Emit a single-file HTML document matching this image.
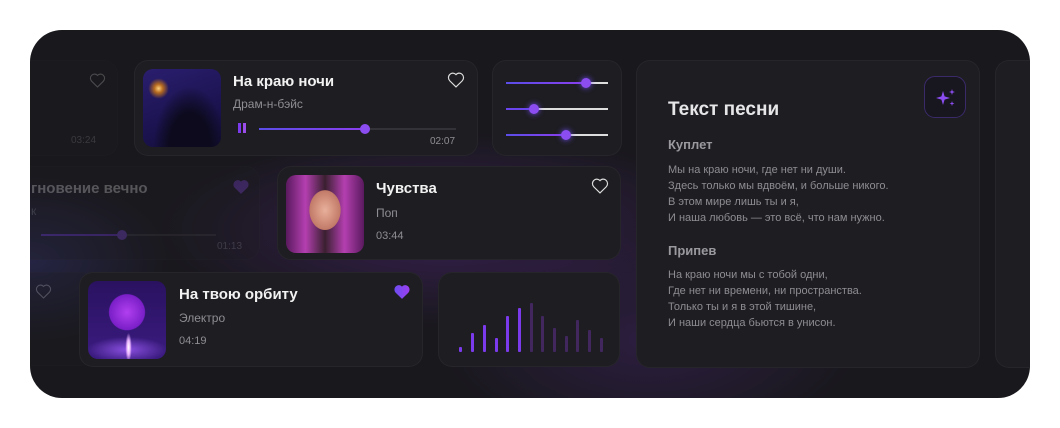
<!DOCTYPE html>
<html><head><meta charset="utf-8"><style>
*{margin:0;padding:0;box-sizing:border-box}
body{width:1060px;height:428px;background:#fff;position:relative;overflow:hidden;font-family:"Liberation Sans",sans-serif}
.wrap{position:absolute;left:30px;top:30px;width:1000px;height:368px;border-radius:32px;overflow:hidden;
background:radial-gradient(ellipse 420px 140px at 420px 200px,rgba(90,40,140,.45),transparent 70%),
radial-gradient(ellipse 300px 150px at 620px 310px,rgba(80,40,130,.35),transparent 70%),
radial-gradient(ellipse 200px 120px at 0px 230px,rgba(60,60,140,.35),transparent 70%),#19181d}
.c{position:absolute;background:#1e1d22;border-radius:14px;border:1px solid rgba(255,255,255,.04)}
.abs{position:absolute}
.t{color:#f2f2f2;font-size:15px;font-weight:bold;white-space:nowrap}
.g{color:#8e8e93;font-size:12px;white-space:nowrap}
.tm{color:#8e8e93;font-size:10px}
.art{position:absolute;border-radius:10px;overflow:hidden}
.fade{opacity:.28}
.bar{position:absolute;width:3px;bottom:14px;border-radius:1px}
.lyr{color:#8d8d92;font-size:11px;line-height:16px}
</style></head><body>
<div class="wrap">
 <div class="c fade" style="left:-40px;top:30px;width:128px;height:96px">
  <svg class="abs" style="left:98px;top:12px" width="17" height="15" viewBox="0 0 24 22"><path d="M12 20.5 3.5 12.2C1 9.7 1 5.7 3.5 3.3s6.3-2.3 8.5.3c2.2-2.6 6-2.8 8.5-.3s2.5 6.4 0 8.9z" fill="none" stroke="#ccc" stroke-width="1.6"/></svg>
  <div class="abs tm" style="left:80px;top:74px">03:24</div>
 </div>
 <div class="c" style="left:104px;top:30px;width:344px;height:96px">
  <div class="art" style="left:8px;top:8px;width:78px;height:78px;background:radial-gradient(circle at 20% 25%,#ffcf7a 0,#b56a20 5%,transparent 12%),radial-gradient(ellipse at 60% 100%,#0c0a1c 0,#0c0a1c 30%,transparent 55%),linear-gradient(160deg,#2a1e6e,#1b1350 60%,#120e36)"></div>
  <div class="abs t" style="left:98px;top:12px">На краю ночи</div>
  <div class="abs g" style="left:98px;top:36px">Драм-н-бэйс</div>
  <div class="abs" style="left:103px;top:62px;width:3px;height:10px;background:#7c3aed"></div>
  <div class="abs" style="left:108px;top:62px;width:3px;height:10px;background:#9b4dea"></div>
  <div class="abs" style="left:124px;top:67px;width:197px;height:2px;background:#333238"></div>
  <div class="abs" style="left:124px;top:67px;width:106px;height:2px;background:linear-gradient(90deg,#5b4de8,#8b3fef)"></div>
  <div class="abs" style="left:225px;top:63px;width:10px;height:10px;border-radius:50%;background:#8b4df0"></div>
  <div class="abs tm" style="left:295px;top:75px">02:07</div>
  <svg class="abs" style="left:312px;top:11px" width="18" height="16" viewBox="0 0 24 22"><path d="M12 20.5 3.5 12.2C1 9.7 1 5.7 3.5 3.3s6.3-2.3 8.5.3c2.2-2.6 6-2.8 8.5-.3s2.5 6.4 0 8.9z" fill="none" stroke="#ddd" stroke-width="1.6"/></svg>
 </div>
 <div class="c" style="left:462px;top:30px;width:130px;height:96px">
  <div class="abs" style="left:13px;top:21px;width:102px;height:2px;background:#ddd"></div>
  <div class="abs" style="left:13px;top:21px;width:80px;height:2px;background:linear-gradient(90deg,#5b4de8,#8b3fef)"></div>
  <div class="abs" style="left:88px;top:17px;width:10px;height:10px;border-radius:50%;background:#8b4df0;box-shadow:0 0 6px #6d4df0"></div>
  <div class="abs" style="left:13px;top:47px;width:102px;height:2px;background:#ddd"></div>
  <div class="abs" style="left:13px;top:47px;width:28px;height:2px;background:#6a45ee"></div>
  <div class="abs" style="left:36px;top:43px;width:10px;height:10px;border-radius:50%;background:#8b4df0;box-shadow:0 0 6px #6d4df0"></div>
  <div class="abs" style="left:13px;top:73px;width:102px;height:2px;background:#ddd"></div>
  <div class="abs" style="left:13px;top:73px;width:60px;height:2px;background:linear-gradient(90deg,#5b4de8,#8b3fef)"></div>
  <div class="abs" style="left:68px;top:69px;width:10px;height:10px;border-radius:50%;background:#8b4df0;box-shadow:0 0 6px #6d4df0"></div>
 </div>
 <div class="c" style="left:606px;top:30px;width:344px;height:308px">
  <div class="abs" style="left:287px;top:15px;width:42px;height:42px;border-radius:11px;background:#18161f;border:1px solid #3b2a6a">
   <svg class="abs" style="left:9px;top:9px" width="24" height="24" viewBox="0 0 24 24"><path d="M9 5 10.6 10.4 16 12 10.6 13.6 9 19 7.4 13.6 2 12 7.4 10.4z" fill="#8b4df0"/><path d="M18 3 18.7 5.3 21 6 18.7 6.7 18 9 17.3 6.7 15 6 17.3 5.3z" fill="#8b4df0"/><path d="M18 15 18.6 16.9 20.5 17.5 18.6 18.1 18 20 17.4 18.1 15.5 17.5 17.4 16.9z" fill="#8b4df0"/></svg>
  </div>
  <div class="abs" style="left:31px;top:38px;color:#e6e6e8;font-size:19px;font-weight:bold">Текст песни</div>
  <div class="abs" style="left:31px;top:76px;color:#9a9a9e;font-size:13px;font-weight:bold">Куплет</div>
  <div class="abs lyr" style="left:31px;top:101px">Мы на краю ночи, где нет ни души.<br>Здесь только мы вдвоём, и больше никого.<br>В этом мире лишь ты и я,<br>И наша любовь — это всё, что нам нужно.</div>
  <div class="abs" style="left:31px;top:182px;color:#9a9a9e;font-size:13px;font-weight:bold">Припев</div>
  <div class="abs lyr" style="left:31px;top:206px">На краю ночи мы с тобой одни,<br>Где нет ни времени, ни пространства.<br>Только ты и я в этой тишине,<br>И наши сердца бьются в унисон.</div>
 </div>
 <div class="c" style="left:965px;top:30px;width:80px;height:308px"></div>
 <div class="c fade" style="left:-30px;top:136px;width:260px;height:94px">
  <div class="abs t" style="left:30px;top:13px;font-size:15px">гновение вечно</div>
  <div class="abs g" style="left:30px;top:37px">к</div>
  <div class="abs" style="left:40px;top:67px;width:175px;height:2px;background:#444"></div>
  <div class="abs" style="left:40px;top:67px;width:81px;height:2px;background:#7c3aed"></div>
  <div class="abs" style="left:116px;top:63px;width:10px;height:10px;border-radius:50%;background:#8b4df0"></div>
  <div class="abs tm" style="left:216px;top:74px">01:13</div>
  <svg class="abs" style="left:231px;top:12px" width="18" height="16" viewBox="0 0 24 22"><path d="M12 20.5 3.5 12.2C1 9.7 1 5.7 3.5 3.3s6.3-2.3 8.5.3c2.2-2.6 6-2.8 8.5-.3s2.5 6.4 0 8.9z" fill="#8b4df0"/></svg>
 </div>
 <div class="c" style="left:247px;top:136px;width:344px;height:94px">
  <div class="art" style="left:8px;top:8px;width:78px;height:78px;background:radial-gradient(ellipse 22px 28px at 50% 45%,#e8b09a,#c27a68 70%,transparent 72%),linear-gradient(90deg,#5a1a5e,#b43fb0 25%,#3a2030 50%,#b43fb0 75%,#5a1a5e)"></div>
  <div class="abs t" style="left:98px;top:13px">Чувства</div>
  <div class="abs g" style="left:98px;top:39px">Поп</div>
  <div class="abs g" style="left:98px;top:63px;font-size:11px">03:44</div>
  <svg class="abs" style="left:313px;top:11px" width="18" height="16" viewBox="0 0 24 22"><path d="M12 20.5 3.5 12.2C1 9.7 1 5.7 3.5 3.3s6.3-2.3 8.5.3c2.2-2.6 6-2.8 8.5-.3s2.5 6.4 0 8.9z" fill="none" stroke="#ddd" stroke-width="1.6"/></svg>
 </div>
 <div class="c fade" style="left:-40px;top:242px;width:105px;height:94px">
  <svg class="abs" style="left:44px;top:11px" width="17" height="15" viewBox="0 0 24 22"><path d="M12 20.5 3.5 12.2C1 9.7 1 5.7 3.5 3.3s6.3-2.3 8.5.3c2.2-2.6 6-2.8 8.5-.3s2.5 6.4 0 8.9z" fill="none" stroke="#ccc" stroke-width="1.6"/></svg>
 </div>
 <div class="c" style="left:49px;top:242px;width:344px;height:95px">
  <div class="art" style="left:8px;top:8px;width:78px;height:78px;background:radial-gradient(ellipse 4px 18px at 52% 85%,#fff,#e9b3ff 40%,transparent 80%),radial-gradient(circle 22px at 50% 40%,#b13ff0,#7a1fc8 80%,transparent 84%),radial-gradient(ellipse 50px 16px at 50% 88%,#8a4fe0,transparent 80%),linear-gradient(180deg,#2a1260,#3a1b80)"></div>
  <div class="abs t" style="left:99px;top:13px">На твою орбиту</div>
  <div class="abs g" style="left:99px;top:38px">Электро</div>
  <div class="abs g" style="left:99px;top:62px;font-size:11px">04:19</div>
  <svg class="abs" style="left:313px;top:11px" width="18" height="16" viewBox="0 0 24 22"><defs><linearGradient id="hg" x1="0" x2="1"><stop offset="0" stop-color="#6d4df0"/><stop offset="1" stop-color="#9b3fef"/></linearGradient></defs><path d="M12 20.5 3.5 12.2C1 9.7 1 5.7 3.5 3.3s6.3-2.3 8.5.3c2.2-2.6 6-2.8 8.5-.3s2.5 6.4 0 8.9z" fill="url(#hg)"/></svg>
 </div>
 <div class="c" style="left:408px;top:242px;width:182px;height:95px">
  <div class="bar" style="left:20px;height:5px;background:#7c3aed"></div>
  <div class="bar" style="left:32px;height:19px;background:#7c3aed"></div>
  <div class="bar" style="left:44px;height:27px;background:#7c3aed"></div>
  <div class="bar" style="left:56px;height:14px;background:#7c3aed"></div>
  <div class="bar" style="left:67px;height:36px;background:#7c3aed"></div>
  <div class="bar" style="left:79px;height:44px;background:#7c3aed"></div>
  <div class="bar" style="left:91px;height:49px;background:#42275f"></div>
  <div class="bar" style="left:102px;height:36px;background:#42275f"></div>
  <div class="bar" style="left:114px;height:24px;background:#42275f"></div>
  <div class="bar" style="left:126px;height:16px;background:#42275f"></div>
  <div class="bar" style="left:137px;height:32px;background:#42275f"></div>
  <div class="bar" style="left:149px;height:22px;background:#42275f"></div>
  <div class="bar" style="left:161px;height:14px;background:#42275f"></div>
 </div>
</div>
</body></html>
